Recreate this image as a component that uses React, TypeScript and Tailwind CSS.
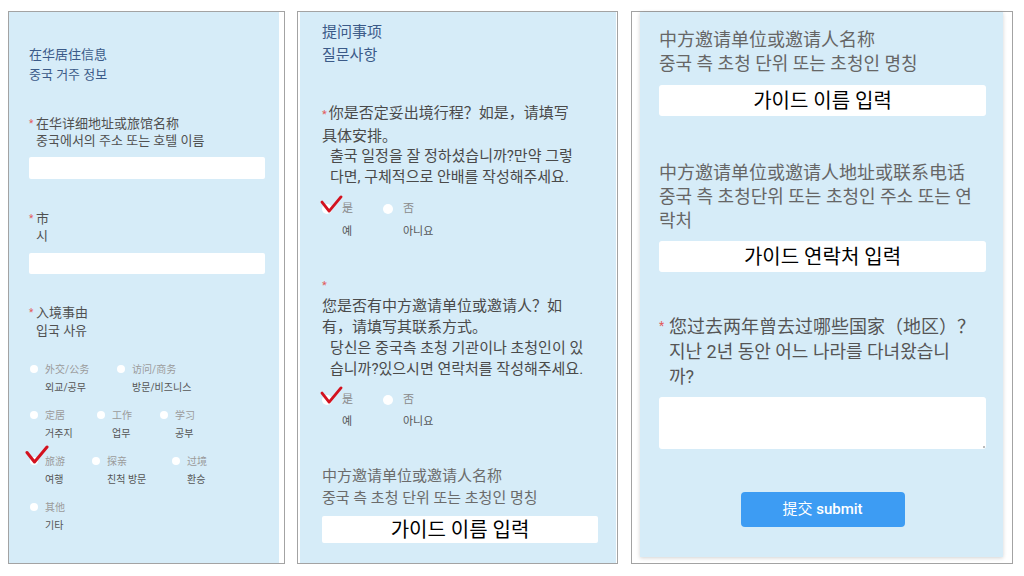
import React from 'react';

const Check = ({ className }: { className?: string }) => (
  <svg className={className} viewBox="-2 -2 24 19" fill="none">
    <path d="M0 5.5 L7.5 15 L20 0" stroke="#d3121f" strokeWidth={3} strokeLinecap="round" strokeLinejoin="round" />
  </svg>
);

const Star = ({ className }: { className?: string }) => (
  <span className={`text-[#e25b5b] ${className ?? ''}`}>*</span>
);

type Opt = { zh: string; ko: string; w: string; checked?: boolean };

const reasonRows: Opt[][] = [
  [
    { zh: '外交/公务', ko: '외교/공무', w: 'w-[87px]' },
    { zh: '访问/商务', ko: '방문/비즈니스', w: 'w-[100px]' },
  ],
  [
    { zh: '定居', ko: '거주지', w: 'w-[67px]' },
    { zh: '工作', ko: '업무', w: 'w-[63px]' },
    { zh: '学习', ko: '공부', w: 'w-[60px]' },
  ],
  [
    { zh: '旅游', ko: '여행', w: 'w-[62px]', checked: true },
    { zh: '探亲', ko: '친척 방문', w: 'w-[80px]' },
    { zh: '过境', ko: '환승', w: 'w-[60px]' },
  ],
  [{ zh: '其他', ko: '기타', w: 'w-[67px]' }],
];

const SmallOption = ({ o }: { o: Opt }) => (
  <div className={`${o.w} relative`}>
    <div className="flex items-center h-[20px]">
      <span className="w-[8px] h-[8px] rounded-full bg-white shrink-0" />
      <span className="ml-[7px] text-[10px] text-[#9b9b9b] whitespace-nowrap">{o.zh}</span>
    </div>
    <div className="pl-[15px] leading-[18px] text-[10px] text-[#555] whitespace-nowrap">{o.ko}</div>
    {o.checked && <Check className="absolute left-[-5px] top-[-6px] w-[24px] h-[19px]" />}
  </div>
);

const YesNo = ({ koLeading }: { koLeading: string }) => (
  <div className="flex">
    <div className="w-[61px] relative">
      <div className="flex items-center h-[22px]">
        <span className="w-[10px] h-[10px] rounded-full bg-white shrink-0" />
        <span className="ml-[10px] text-[11px] text-[#8a8a8a]">是</span>
      </div>
      <div className={`pl-[20px] ${koLeading} text-[11px] text-[#555]`}>예</div>
      <Check className="absolute left-[-2px] top-[-3px] w-[23px] h-[18px]" />
    </div>
    <div>
      <div className="flex items-center h-[22px]">
        <span className="w-[10px] h-[10px] rounded-full bg-white shrink-0" />
        <span className="ml-[10px] text-[11px] text-[#8a8a8a]">否</span>
      </div>
      <div className={`pl-[20px] ${koLeading} text-[11px] text-[#555]`}>아니요</div>
    </div>
  </div>
);

const PanelOne = () => (
  <div className="w-[277px] h-[553px] border border-[#a3a3a3] bg-white flex">
    <div className="flex-1 mr-[5px] bg-[#d6ecf8] pt-[33px] pl-[20px] pr-[14px]">
      <div className="text-[13px] leading-[20px] text-[#3b5a88]">
        <div>在华居住信息</div>
        <div>중국 거주 정보</div>
      </div>

      <div className="mt-[30px] flex text-[13px] leading-[17px] text-[#505050]">
        <Star className="w-[7px] text-[10px]" />
        <div>
          <div>在华详细地址或旅馆名称</div>
          <div>중국에서의 주소 또는 호텔 이름</div>
        </div>
      </div>
      <div className="mt-[8px] h-[22px] bg-white rounded-[2px]" />

      <div className="mt-[31px] flex text-[13px] leading-[17px] text-[#505050]">
        <Star className="w-[7px] text-[10px]" />
        <div>
          <div>市</div>
          <div>시</div>
        </div>
      </div>
      <div className="mt-[9px] h-[21px] bg-white rounded-[2px]" />

      <div className="mt-[30px] flex text-[13px] leading-[18px] text-[#505050]">
        <Star className="w-[7px] text-[10px]" />
        <div>
          <div>入境事由</div>
          <div>입국 사유</div>
        </div>
      </div>

      <div className="mt-[19px] ml-[1px] flex flex-col gap-[8px]">
        {reasonRows.map((row, i) => (
          <div key={i} className="flex">
            {row.map((o) => (
              <SmallOption key={o.zh} o={o} />
            ))}
          </div>
        ))}
      </div>
    </div>
  </div>
);

const PanelTwo = () => (
  <div className="ml-[12px] w-[321px] h-[553px] border border-[#a3a3a3] bg-white flex">
    <div className="flex-1 ml-[2px] mr-[1px] bg-[#d6ecf8] pt-[9px] pl-[22px] pr-[18px]">
      <div className="text-[15px] leading-[23px] text-[#3b5a88]">
        <div>提问事项</div>
        <div>질문사항</div>
      </div>

      <div className="mt-[36px] text-[15px] leading-[20.5px] text-[#4a4a4a] whitespace-nowrap">
        <div>
          <Star className="text-[11px] mr-[2px]" />你是否定妥出境行程？如是，请填写
        </div>
        <div>具体安排。</div>
        <div className="pl-[8px]">출국 일정을 잘 정하셨습니까?만약 그렇</div>
        <div className="pl-[8px]">다면, 구체적으로 안배를 작성해주세요.</div>
      </div>
      <div className="mt-[11px]">
        <YesNo koLeading="leading-[24px]" />
      </div>

      <div className="mt-[30px] text-[15px] leading-[21px] text-[#4a4a4a] whitespace-nowrap">
        <div><Star className="text-[11px]" /></div>
        <div>您是否有中方邀请单位或邀请人？如</div>
        <div>有，请填写其联系方式。</div>
        <div className="pl-[8px]">당신은 중국측 초청 기관이나 초청인이 있</div>
        <div className="pl-[8px]">습니까?있으시면 연락처를 작성해주세요.</div>
      </div>
      <div className="mt-[9px]">
        <YesNo koLeading="leading-[22px]" />
      </div>

      <div className="mt-[33px] text-[15px] leading-[21.5px] text-[#6b6b6b] whitespace-nowrap">
        <div>中方邀请单位或邀请人名称</div>
        <div>중국 측 초청 단위 또는 초청인 명칭</div>
      </div>
      <div className="mt-[7px] h-[27px] bg-white rounded-[2px] flex items-center justify-center text-[20px] text-black">
        가이드 이름 입력
      </div>
    </div>
  </div>
);

const PanelThree = () => (
  <div className="ml-[13px] w-[382px] h-[553px] border border-[#a3a3a3] bg-white flex">
    <div className="flex-1 ml-[8px] mr-[9px] mb-[6px] bg-[#d6ecf8] shadow-[0_1px_4px_rgba(0,0,0,0.18)] pt-[16px] pl-[19px] pr-[17px] flex flex-col">
      <div className="text-[18px] leading-[24px] text-[#666] whitespace-nowrap">
        <div>中方邀请单位或邀请人名称</div>
        <div>중국 측 초청 단위 또는 초청인 명칭</div>
      </div>
      <div className="mt-[9px] h-[31px] bg-white rounded-[3px] flex items-center justify-center text-[20px] text-black">
        가이드 이름 입력
      </div>

      <div className="mt-[45px] text-[18px] leading-[24px] text-[#666] whitespace-nowrap">
        <div>中方邀请单位或邀请人地址或联系电话</div>
        <div>중국 측 초청단위 또는 초청인 주소 또는 연</div>
        <div>락처</div>
      </div>
      <div className="mt-[8px] h-[31px] bg-white rounded-[3px] flex items-center justify-center text-[20px] text-black">
        가이드 연락처 입력
      </div>

      <div className="mt-[42px] flex text-[18px] leading-[25px] text-[#555] whitespace-nowrap">
        <Star className="w-[10px] text-[12px]" />
        <div>
          <div>您过去两年曾去过哪些国家（地区）？</div>
          <div>지난 2년 동안 어느 나라를 다녀왔습니</div>
          <div>까?</div>
        </div>
      </div>
      <div className="mt-[8px] h-[52px] bg-white rounded-[3px] relative">
        <span className="absolute right-[1px] bottom-[1px] w-[2px] h-[2px] bg-[#bbb]" />
      </div>

      <div className="mt-[43px] flex justify-center">
        <button className="w-[164px] h-[35px] rounded-[4px] bg-[#3d9cf3] text-white text-[15px]">
          提交 <span className="font-medium">submit</span>
        </button>
      </div>
    </div>
  </div>
);

export default function App() {
  return (
    <div className="w-[1024px] h-[576px] bg-white flex items-start pt-[11px] pl-[8px] font-['Roboto','Noto_Sans_CJK_SC',sans-serif]">
      <PanelOne />
      <PanelTwo />
      <PanelThree />
    </div>
  );
}
